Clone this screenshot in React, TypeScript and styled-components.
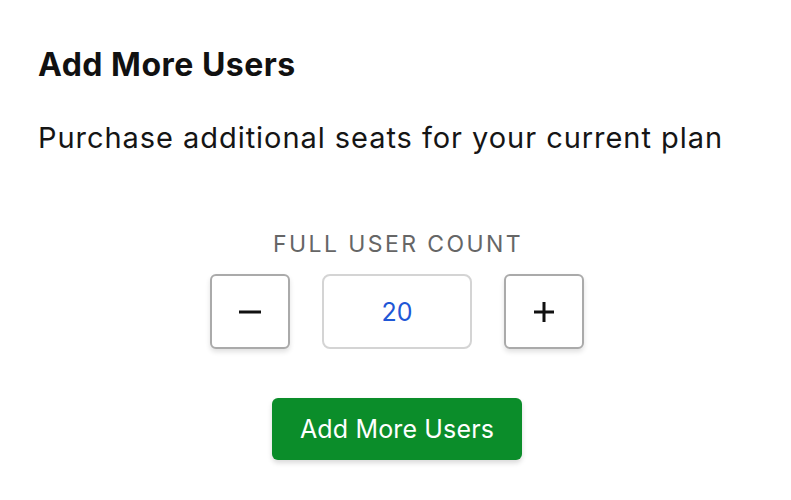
import React, { useState } from "react";
import styled, { createGlobalStyle } from "styled-components";

const Global = createGlobalStyle`
  html, body { margin: 0; padding: 0; background: #ffffff; }
  body { font-family: Inter, "Noto Sans", sans-serif; color: #111; }
`;

const Page = styled.div`
  width: 791px;
  height: 500px;
  box-sizing: border-box;
  padding: 45px 35px 0 38px;
  display: flex;
  flex-direction: column;
`;

const Title = styled.h1`
  margin: 0;
  font-size: 32px;
  font-weight: 700;
  line-height: 40px;
  letter-spacing: 0.5px;
  color: #111;
`;

const Subtitle = styled.p`
  margin: 36px 0 0;
  font-size: 29px;
  font-weight: 400;
  line-height: 34px;
  letter-spacing: 0.95px;
  color: #151515;
`;

const Counter = styled.div`
  margin-top: 75px;
  display: flex;
  flex-direction: column;
  align-items: center;
`;

const Label = styled.div`
  font-size: 23px;
  letter-spacing: 2.4px;
  color: #666;
  line-height: 28px;
  padding-left: 2px;
`;

const Controls = styled.div`
  margin-top: 16px;
  display: flex;
  gap: 32px;
  align-items: center;
`;

const StepButton = styled.button`
  width: 80px;
  height: 75px;
  box-sizing: border-box;
  border: 2px solid #aaaaaa;
  border-radius: 6px;
  background: #fff;
  box-shadow: 0 3px 5px rgba(0, 0, 0, 0.12);
  display: flex;
  align-items: center;
  justify-content: center;
  padding: 0;
  cursor: pointer;
  color: #111;
`;

const CountBox = styled.div`
  width: 150px;
  height: 75px;
  box-sizing: border-box;
  border: 2px solid #d4d4d4;
  border-radius: 8px;
  display: flex;
  align-items: center;
  justify-content: center;
  font-size: 25px;
  color: #1f57d6;
`;

const Submit = styled.button`
  margin-top: 49px;
  width: 250px;
  height: 62px;
  border: none;
  border-radius: 6px;
  background: #0b8d2a;
  color: #fff;
  font-family: Inter, "Noto Sans", sans-serif;
  font-size: 25px;
  letter-spacing: 0.15px;
  box-shadow: 0 3px 5px rgba(0, 0, 0, 0.15);
  cursor: pointer;
`;

const Minus = () => (
  <svg width="22" height="22" viewBox="0 0 22 22">
    <rect x="0" y="9.5" width="22" height="3" fill="#111" />
  </svg>
);

const Plus = () => (
  <svg width="22" height="22" viewBox="0 0 22 22">
    <rect x="1" y="9.5" width="20" height="3" fill="#111" />
    <rect x="9.5" y="1" width="3" height="20" fill="#111" />
  </svg>
);

export default function App() {
  const [count, setCount] = useState(20);
  return (
    <>
      <Global />
      <Page>
        <Title>Add More Users</Title>
        <Subtitle>Purchase additional seats for your current plan</Subtitle>
        <Counter>
          <Label>FULL USER COUNT</Label>
          <Controls>
            <StepButton aria-label="decrease" onClick={() => setCount((c) => Math.max(0, c - 1))}>
              <Minus />
            </StepButton>
            <CountBox>{count}</CountBox>
            <StepButton aria-label="increase" onClick={() => setCount((c) => c + 1)}>
              <Plus />
            </StepButton>
          </Controls>
          <Submit>Add More Users</Submit>
        </Counter>
      </Page>
    </>
  );
}
